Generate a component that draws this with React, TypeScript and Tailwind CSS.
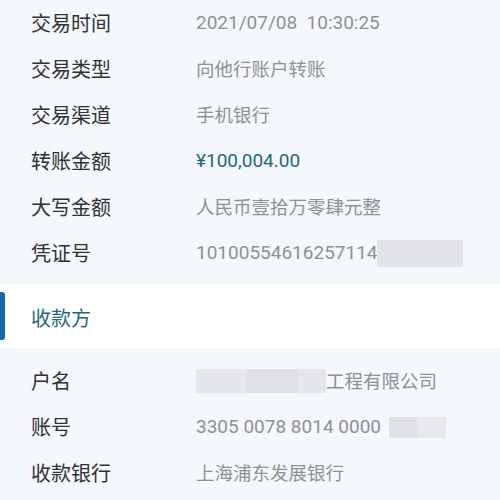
const font = { fontFamily: '"Noto Sans CJK SC", "Noto Sans", sans-serif' };
const numFont = { fontFamily: 'Roboto, "Noto Sans CJK SC", sans-serif' };

type Row = { label: string; value: React.ReactNode };

const Num = ({ children, className = '' }: { children: React.ReactNode; className?: string }) => (
  <span className={`text-[19px] ${className}`} style={numFont}>
    {children}
  </span>
);

const InfoRow = ({ label, value }: Row) => (
  <div className="flex h-[46px] items-center">
    <div className="w-[165px] shrink-0 text-[20px] text-[#2f3134]">{label}</div>
    <div className="flex items-center text-[18.5px] text-[#8e9196] whitespace-pre">{value}</div>
  </div>
);

const tradeRows: Row[] = [
  { label: '交易时间', value: <Num>2021/07/08  10:30:25</Num> },
  { label: '交易类型', value: '向他行账户转账' },
  { label: '交易渠道', value: '手机银行' },
  { label: '转账金额', value: <Num className="text-[#1b6a7c]">¥100,004.00</Num> },
  { label: '大写金额', value: '人民币壹拾万零肆元整' },
  {
    label: '凭证号',
    value: (
      <>
        <Num>10100554616257114</Num>
        <span className="-ml-[1px] inline-block h-[27px] w-[86px] bg-[#e2e4e8]" />
      </>
    ),
  },
];

const payeeRows: Row[] = [
  {
    label: '户名',
    value: (
      <>
        <span className="flex h-[24px] w-[130px]">
          <span className="w-[50px] bg-[#e6e7eb]" />
          <span className="w-[52px] bg-[#dfe1e5]" />
          <span className="w-[28px] bg-[#e4e6ea]" />
        </span>
        <span>工程有限公司</span>
      </>
    ),
  },
  {
    label: '账号',
    value: (
      <>
        <Num>3305 0078 8014 0000 </Num>
        <span className="ml-[3px] flex h-[21px] w-[57px]">
          <span className="w-[28px] bg-[#e0e2e6]" />
          <span className="w-[29px] bg-[#e8e9ed]" />
        </span>
      </>
    ),
  },
  { label: '收款银行', value: '上海浦东发展银行' },
];

export default function App() {
  return (
    <div className="h-[500px] w-[500px] overflow-hidden bg-[#f4f7fb]" style={font}>
      <div className="px-[31px] pb-[8px]">
        {tradeRows.map((r) => (
          <InfoRow key={r.label} {...r} />
        ))}
      </div>

      <div className="relative flex h-[64px] items-center bg-white px-[31px]">
        <span className="absolute left-0 top-[8px] h-[48px] w-[5px] rounded-r-[3px] bg-[#1667b2]" />
        <h3 className="mt-[3px] text-[20px] text-[#23687c]">收款方</h3>
      </div>

      <div className="px-[31px] pt-[10px]">
        {payeeRows.map((r) => (
          <InfoRow key={r.label} {...r} />
        ))}
      </div>
    </div>
  );
}
